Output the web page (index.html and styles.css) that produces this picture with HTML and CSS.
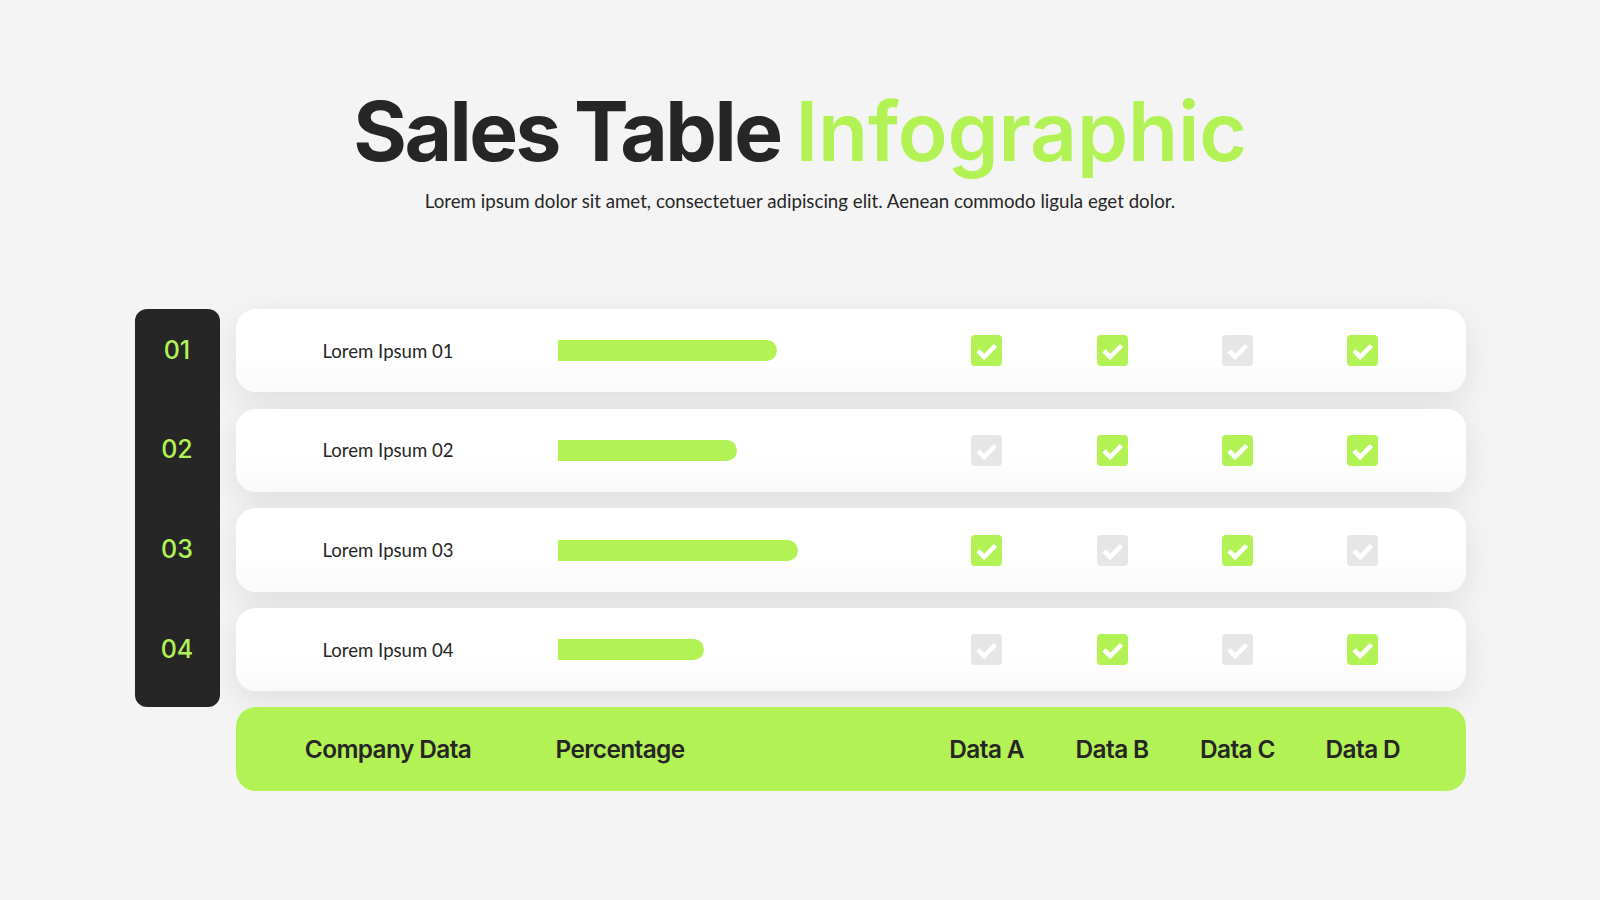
FILE: index.html
```html
<!DOCTYPE html>
<html lang="en">
<head>
<meta charset="utf-8">
<title>Sales Table Infographic</title>
<link rel="stylesheet" href="styles.css">
</head>
<body>
<main class="page">
  <header class="head">
    <h1 class="title">Sales Table <span class="accent">Infographic</span></h1>
    <p class="subtitle">Lorem ipsum dolor sit amet, consectetuer adipiscing elit. Aenean commodo ligula eget dolor.</p>
  </header>

  <section class="table">
    <div class="index-col">
      <div class="num">01</div>
      <div class="num">02</div>
      <div class="num">03</div>
      <div class="num">04</div>
    </div>

    <div class="rows">
      <div class="row">
        <div class="label">Lorem Ipsum 01</div>
        <div class="pct"><div class="bar" style="width:219px"></div></div>
        <div class="cell"><span class="box on"><svg viewBox="0 0 31 31"><path d="M7 15.8 L13.2 22 L24.5 10.5"/></svg></span></div>
        <div class="cell"><span class="box on"><svg viewBox="0 0 31 31"><path d="M7 15.8 L13.2 22 L24.5 10.5"/></svg></span></div>
        <div class="cell"><span class="box off"><svg viewBox="0 0 31 31"><path d="M7 15.8 L13.2 22 L24.5 10.5"/></svg></span></div>
        <div class="cell"><span class="box on"><svg viewBox="0 0 31 31"><path d="M7 15.8 L13.2 22 L24.5 10.5"/></svg></span></div>
      </div>
      <div class="row">
        <div class="label">Lorem Ipsum 02</div>
        <div class="pct"><div class="bar" style="width:179px"></div></div>
        <div class="cell"><span class="box off"><svg viewBox="0 0 31 31"><path d="M7 15.8 L13.2 22 L24.5 10.5"/></svg></span></div>
        <div class="cell"><span class="box on"><svg viewBox="0 0 31 31"><path d="M7 15.8 L13.2 22 L24.5 10.5"/></svg></span></div>
        <div class="cell"><span class="box on"><svg viewBox="0 0 31 31"><path d="M7 15.8 L13.2 22 L24.5 10.5"/></svg></span></div>
        <div class="cell"><span class="box on"><svg viewBox="0 0 31 31"><path d="M7 15.8 L13.2 22 L24.5 10.5"/></svg></span></div>
      </div>
      <div class="row">
        <div class="label">Lorem Ipsum 03</div>
        <div class="pct"><div class="bar" style="width:240px"></div></div>
        <div class="cell"><span class="box on"><svg viewBox="0 0 31 31"><path d="M7 15.8 L13.2 22 L24.5 10.5"/></svg></span></div>
        <div class="cell"><span class="box off"><svg viewBox="0 0 31 31"><path d="M7 15.8 L13.2 22 L24.5 10.5"/></svg></span></div>
        <div class="cell"><span class="box on"><svg viewBox="0 0 31 31"><path d="M7 15.8 L13.2 22 L24.5 10.5"/></svg></span></div>
        <div class="cell"><span class="box off"><svg viewBox="0 0 31 31"><path d="M7 15.8 L13.2 22 L24.5 10.5"/></svg></span></div>
      </div>
      <div class="row">
        <div class="label">Lorem Ipsum 04</div>
        <div class="pct"><div class="bar" style="width:146px"></div></div>
        <div class="cell"><span class="box off"><svg viewBox="0 0 31 31"><path d="M7 15.8 L13.2 22 L24.5 10.5"/></svg></span></div>
        <div class="cell"><span class="box on"><svg viewBox="0 0 31 31"><path d="M7 15.8 L13.2 22 L24.5 10.5"/></svg></span></div>
        <div class="cell"><span class="box off"><svg viewBox="0 0 31 31"><path d="M7 15.8 L13.2 22 L24.5 10.5"/></svg></span></div>
        <div class="cell"><span class="box on"><svg viewBox="0 0 31 31"><path d="M7 15.8 L13.2 22 L24.5 10.5"/></svg></span></div>
      </div>
    </div>

    <div class="footer">
      <div class="f-label">Company Data</div>
      <div class="f-pct">Percentage</div>
      <div class="f-cell">Data A</div>
      <div class="f-cell">Data B</div>
      <div class="f-cell">Data C</div>
      <div class="f-cell">Data D</div>
    </div>
  </section>
</main>
</body>
</html>
```

FILE: styles.css
```css
* { box-sizing: border-box; }

html, body {
  margin: 0;
  padding: 0;
  background: #f4f4f4;
}

body {
  width: 1600px;
  height: 900px;
  overflow: hidden;
  color: #262626;
  font-family: "Inter", "Liberation Sans", sans-serif;
}

.page {
  padding-top: 91px;
}

.head {
  text-align: center;
}

.title {
  margin: 0;
  font-family: "Inter", sans-serif;
  font-weight: 700;
  font-size: 82px;
  line-height: 82px;
  letter-spacing: -2.5px;
  word-spacing: -2px;
  color: #262626;
}

.accent {
  color: #b3f255;
  font-weight: 600;
  letter-spacing: -0.2px;
}

.subtitle {
  margin: 16px 0 0;
  font-family: "Lato", "Open Sans", sans-serif;
  font-size: 18.7px;
  line-height: 24px;
  color: #262626;
}

.table {
  width: 1331px;
  margin: 96px auto 0;
  display: grid;
  grid-template-columns: 85px 1230px;
  column-gap: 16px;
}

.index-col {
  grid-column: 1;
  grid-row: 1;
  background: #262626;
  border-radius: 12px;
  display: flex;
  flex-direction: column;
  gap: 16.3px;
  padding-bottom: 16px;
}

.num {
  height: 83.4px;
  display: flex;
  align-items: center;
  justify-content: center;
  font-family: "Inter", sans-serif;
  font-weight: 500;
  font-size: 25px;
  color: #b3f255;
  padding-bottom: 2px;
}

.rows {
  grid-column: 2;
  grid-row: 1;
  display: flex;
  flex-direction: column;
  gap: 16.3px;
  padding-bottom: 16px;
}

.row,
.footer {
  height: 83.4px;
  border-radius: 20px;
  display: grid;
  grid-template-columns: 305px 383.5px repeat(4, 125.4px);
  align-items: center;
}

.row {
  background: linear-gradient(180deg, #ffffff 55%, #fafafa 100%);
  box-shadow: 0 10px 34px rgba(0, 0, 0, 0.09);
}

.label {
  text-align: center;
  font-family: "Lato", "Open Sans", sans-serif;
  font-size: 18.6px;
  color: #262626;
}

.pct {
  padding-left: 17px;
  display: flex;
}

.bar {
  height: 21px;
  background: #b3f255;
  border-radius: 0 11px 11px 0;
}

.cell {
  display: flex;
  justify-content: center;
}

.box {
  width: 31px;
  height: 31px;
  border-radius: 4px;
  display: block;
}

.box svg {
  display: block;
  width: 31px;
  height: 31px;
  fill: none;
  stroke: #ffffff;
  stroke-width: 4.6;
  stroke-linecap: butt;
  stroke-linejoin: miter;
}

.box.on { background: #b3f255; }
.box.off { background: #e6e6e6; }

.footer {
  grid-column: 2;
  grid-row: 2;
  background: #b3f255;
  font-family: "Inter", sans-serif;
  font-weight: 600;
  font-size: 24.4px;
  letter-spacing: -0.6px;
  color: #262626;
}

.f-label { text-align: center; }
.f-pct { padding-left: 15px; }
.f-cell { text-align: center; }
```
